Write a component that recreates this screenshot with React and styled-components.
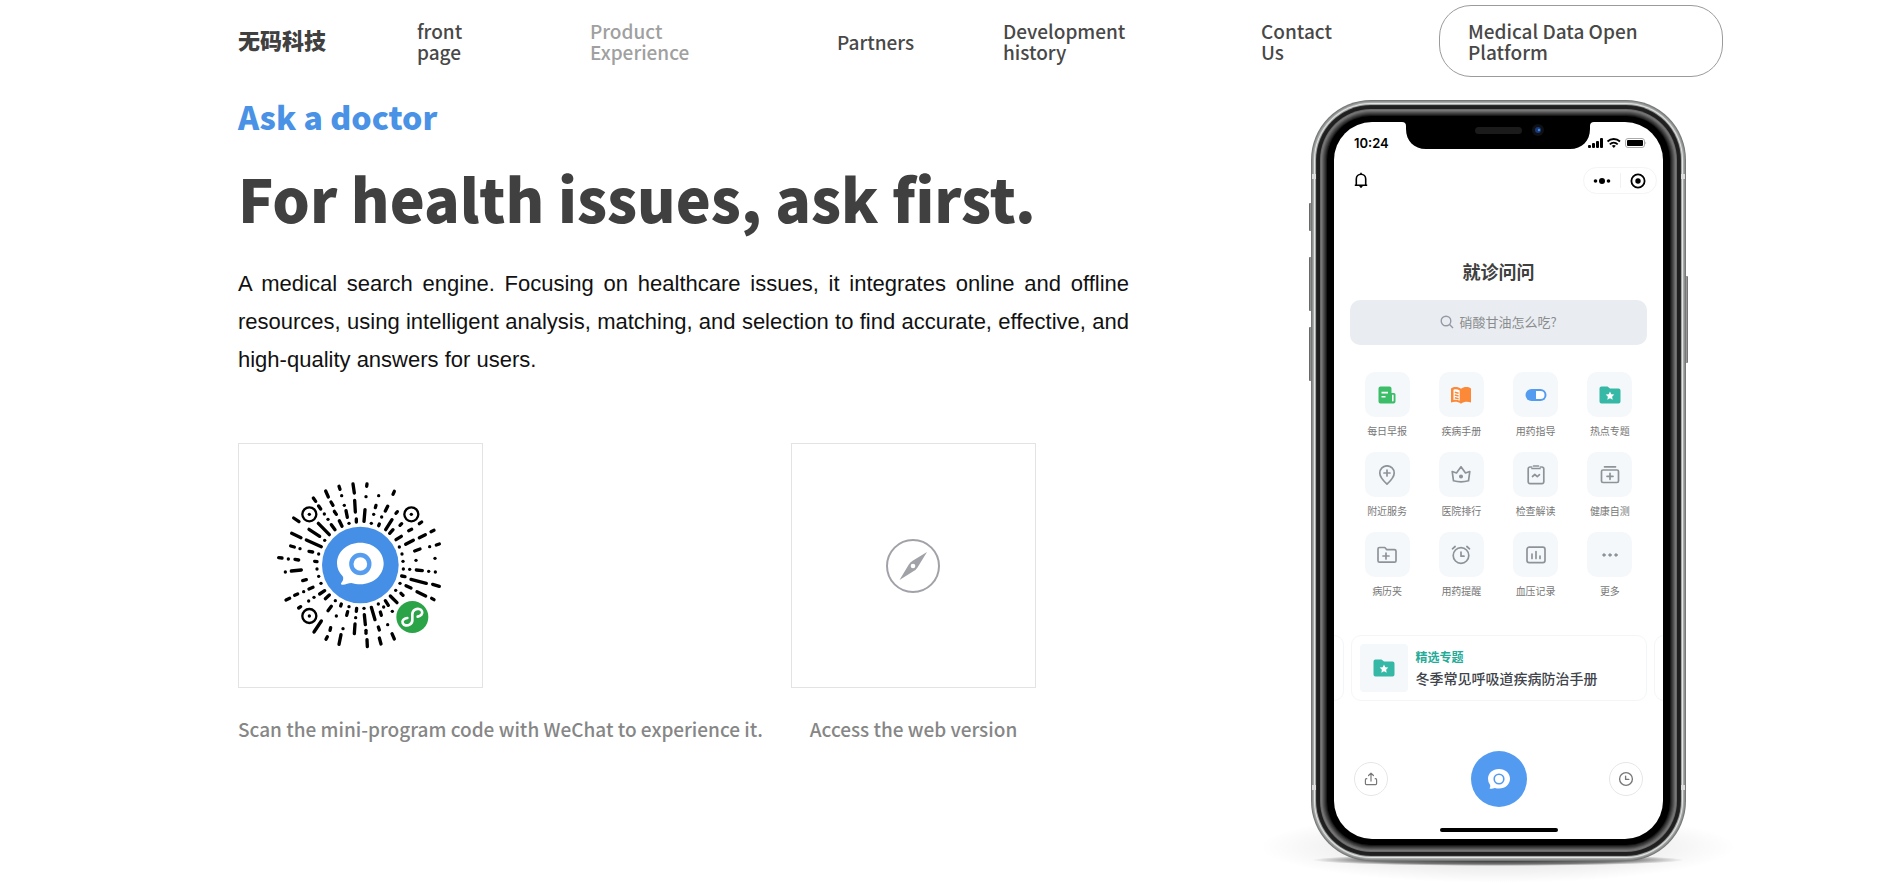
import React from "react";
import styled, { createGlobalStyle } from "styled-components";

const sans = `"Noto Sans CJK SC", "Noto Sans", sans-serif`;

const GlobalStyle = createGlobalStyle`
  * {
    box-sizing: border-box;
  }
  body {
    margin: 0;
    background-color: white;
    color: #404040;
    font-family: ${sans};
  }
`;

const navLinks = [
  { label: "front page" },
  { label: "Product Experience", active: true },
  { label: "Partners" },
  { label: "Development history" },
  { label: "Contact Us" },
];

// [x1, y1, x2, y2] of every dash, [x, y] for the single dots
const rays = [
  [370, 163, 374, 190], [375, 212, 377, 247], [380, 268, 380, 277],
  [412, 163, 411, 170], [409, 201], [406, 240, 403, 275], [447, 198],
  [439, 227, 437, 234], [432, 254], [425, 281], [494, 185, 490, 194],
  [474, 230, 467, 244], [456, 262], [449, 283, 447, 288],
  [503, 246, 499, 251], [487, 270, 468, 300], [516, 282, 511, 287],
  [490, 300, 480, 311], [515, 320, 499, 330], [576, 277, 569, 282],
  [546, 299, 537, 303], [613, 302, 604, 306], [587, 315, 569, 324],
  [551, 332, 528, 344], [629, 343, 620, 346], [600, 351],
  [571, 358, 555, 364], [509, 352], [517, 373], [616, 386], [559, 392],
  [520, 395], [617, 427], [597, 425], [578, 423, 560, 421], [540, 419],
  [521, 418], [516, 439, 526, 441], [544, 449, 590, 461],
  [609, 464, 629, 470], [511, 461], [529, 468, 544, 475],
  [562, 486, 588, 499], [606, 506, 613, 510], [498, 482],
  [514, 491, 520, 497], [482, 499, 502, 519], [467, 513, 476, 527],
  [488, 545], [462, 532], [446, 523], [452, 547, 455, 557], [474, 585],
  [487, 612, 494, 628], [449, 625, 454, 643], [446, 592, 449, 601],
  [425, 533, 436, 570], [403, 536], [404, 555, 407, 585],
  [409, 602, 409, 611], [412, 630, 413, 651], [381, 536, 380, 545],
  [378, 564], [376, 583, 374, 612], [358, 531], [354, 546, 351, 557],
  [340, 597], [334, 615, 328, 644], [335, 523, 333, 529], [320, 559],
  [305, 530, 295, 543], [303, 594, 301, 602], [293, 621, 289, 629],
  [317, 513], [299, 496, 287, 507], [275, 574, 253, 607],
  [285, 483, 270, 493], [274, 461], [267, 440], [253, 503], [237, 514],
  [213, 531, 207, 535], [250, 473, 238, 478], [222, 486],
  [204, 493, 195, 497], [180, 506, 169, 511], [230, 450, 219, 453],
  [262, 418], [215, 421, 185, 424], [167, 427], [262, 396, 255, 395],
  [207, 391, 196, 389], [176, 388], [157, 385, 147, 384],
  [249, 367, 238, 365], [267, 373], [211, 357], [194, 352, 183, 349],
  [275, 351, 230, 331], [214, 324, 186, 311], [285, 332],
  [270, 320, 238, 299], [299, 315, 266, 281], [316, 300, 305, 285],
  [208, 276, 192, 265], [337, 290, 329, 273], [320, 254, 314, 245],
  [295, 269], [284, 253], [273, 238, 267, 229], [258, 215, 251, 205],
  [296, 202, 288, 184], [310, 227, 304, 217], [358, 281],
  [353, 263, 349, 243], [344, 227], [336, 198], [331, 179, 328, 170],
];

const finders = [
  [239, 254],
  [545, 254],
  [239, 559],
];

const MiniProgramCode = () => (
  <svg viewBox="28 43 729 729" width="100%" height="100%" role="img">
    <title>mini-program code</title>
    <g stroke="black" strokeWidth="10" strokeLinecap="round">
      {rays.map(([x1, y1, x2 = x1, y2 = y1]) => (
        <line key={`${x1}-${y1}`} x1={x1} y1={y1} x2={x2} y2={y2} />
      ))}
    </g>
    {finders.map(([x, y]) => (
      <g key={`${x}-${y}`}>
        <circle cx={x} cy={y} r="28" fill="white" />
        <circle cx={x} cy={y} r="21" fill="none" stroke="black" strokeWidth="7" />
        <circle cx={x} cy={y} r="5" />
      </g>
    ))}
    <circle cx="392" cy="406" r="115" fill="#458fe6" />
    <path
      d="M392 339c40 0 70 27 70 62s-30 63-70 63c-9 0-19-2-27-4-9 0-18 6-28 5-5-1-3-5 0-8 4-5 5-12 2-17-11-11-17-24-17-39 0-35 30-62 70-62z"
      fill="white"
    />
    <circle cx="392" cy="403" r="27" fill="white" stroke="#569df0" strokeWidth="13" />
    <circle cx="548" cy="562" r="56" fill="white" />
    <circle cx="548" cy="562" r="48" fill="#2aa446" />
    <path
      d="M533 565c-11 2-17 8-14 15 3 8 14 9 21 5 6-3 8-7 8-13v-18c0-6 3-11 8-14 7-4 18-3 21 5 3 7-3 14-13 16"
      fill="none"
      stroke="white"
      strokeWidth="8"
      strokeLinecap="round"
    />
  </svg>
);

const CompassIcon = () => (
  <svg width="54" height="54" viewBox="0 0 54 54">
    <circle cx="27" cy="27" r="26" fill="none" stroke="#a0a2a8" strokeWidth="2" />
    <path
      d="M41 13 31.500 28.500Q30 31 27 32.500L13.500 41 22.500 26Q24 23 27 21.500z"
      fill="#a0a2a8"
    />
    <circle cx="27" cy="27" r="2.300" fill="white" />
  </svg>
);

const NewsIcon = () => (
  <svg width="20" height="20" viewBox="0 0 20 20">
    <path d="M3.500 1.500h9a2 2 0 0 1 2 2V8H17a1.500 1.500 0 0 1 1.500 1.500v7a2 2 0 0 1-2 2h-13a2 2 0 0 1-2-2v-13a2 2 0 0 1 2-2z" fill="#3cbd68" />
    <path d="M15 9.800h1.600v6a.8.8 0 0 1-1.600 0zM4.500 6.800h6.500v1.600H4.500zM4.500 11h4v1.600h-4z" fill="white" />
  </svg>
);

const BookIcon = () => (
  <svg width="20" height="20" viewBox="0 0 20 20">
    <path d="M0 3.500C3 1.500 7 1.500 10 3.700c3-2.200 7-2.200 10-.2v14c-3.500-1.300-7-1-10 1.200-3-2.200-6.500-2.500-10-1.200z" fill="#fb8938" />
    <path d="M2.500 4.800c2-.8 4-.6 6.200.6v10.400c-2-1-4-1.200-6.200-.8z" fill="white" />
    <path d="M3.800 7.200l3.800 1M3.800 10l3.800 1M3.800 12.800l3.800 1" stroke="#fb8938" strokeWidth="1.400" />
  </svg>
);

const PillIcon = () => (
  <svg width="22" height="14" viewBox="0 0 22 14">
    <rect x="0.500" y="1" width="21" height="12" rx="6" fill="#549cf0" />
    <path d="M11 3h4.500a4 4 0 0 1 0 8H11z" fill="white" />
  </svg>
);

const StarFolderIcon = () => (
  <svg width="22" height="18" viewBox="0 0 22 18">
    <path d="M2.500.5h6l2.500 2h8.500a2 2 0 0 1 2 2v11a2 2 0 0 1-2 2h-17a2 2 0 0 1-2-2v-13a2 2 0 0 1 2-2z" fill="#35b8a6" />
    <path d="m11 5.500 1.300 2.700 3 .4-2.200 2.100.6 3L11 12.300l-2.700 1.400.6-3-2.200-2.100 3-.4z" fill="white" />
  </svg>
);

const LineIcon = ({ size = 20, color = "#8d9499", width = 1.7, children }) => (
  <svg
    width={size}
    height={size}
    viewBox="0 0 20 20"
    fill="none"
    stroke={color}
    strokeWidth={width}
    strokeLinecap="round"
    strokeLinejoin="round"
  >
    {children}
  </svg>
);

const PinIcon = () => (
  <LineIcon>
    <path d="M10 19.200C6 15.500 2.800 12 2.800 8a7.200 7.200 0 0 1 14.400 0c0 4-3.200 7.500-7.200 11.200zM10 5v6M7 8h6" />
  </LineIcon>
);

const CrownIcon = () => (
  <LineIcon>
    <path d="M1.200 6.500 5.500 8 10 1.800 14.500 8l4.300-1.500-1.300 9.300Q10 17.800 2.500 15.800z" />
    <circle cx="10" cy="11.500" r="1.200" fill="#8d9499" />
  </LineIcon>
);

const ReportIcon = () => (
  <LineIcon>
    <path d="M5.500 2H4a1.800 1.800 0 0 0-1.800 1.800v13A1.800 1.800 0 0 0 4 18.600h12a1.800 1.800 0 0 0 1.800-1.800v-13A1.800 1.800 0 0 0 16 2h-1.500M7.500 1h5M6 3.500h8M6.500 11.500 8.800 9.500l2.500 2.200 2.200-2" />
  </LineIcon>
);

const HealthBoxIcon = () => (
  <LineIcon>
    <rect x="1.500" y="5" width="17" height="12.500" rx="1.500" />
    <path d="M4.500 1.800h11M10 8.300v6M7 11.300h6" />
  </LineIcon>
);

const PlusFolderIcon = () => (
  <LineIcon>
    <path d="M2.500 2.500h5.300l2 2.200h7.700a1.500 1.500 0 0 1 1.500 1.500v9.500a1.500 1.500 0 0 1-1.500 1.500h-15A1.500 1.500 0 0 1 1 15.700V4a1.500 1.500 0 0 1 1.500-1.500zM9 8v6M6 11h6" />
  </LineIcon>
);

const AlarmIcon = () => (
  <LineIcon>
    <circle cx="10" cy="10.500" r="7.800" />
    <path d="M10 7v4.200h3M1.500 3.800l2.600-2.300M18.500 3.800l-2.600-2.300" />
  </LineIcon>
);

const ChartIcon = () => (
  <LineIcon>
    <rect x="1" y="2.200" width="18" height="15.500" rx="2.200" />
    <path d="M6 9v4.500M10 6.500v7M14 11v2.500" />
  </LineIcon>
);

const MoreIcon = () => (
  <LineIcon>
    <g fill="#8d9499" strokeWidth="0.800">
      <circle cx="4" cy="10" r="1.300" />
      <circle cx="10" cy="10" r="1.300" />
      <circle cx="16" cy="10" r="1.300" />
    </g>
  </LineIcon>
);

const services = [
  { name: "每日早报", icon: NewsIcon },
  { name: "疾病手册", icon: BookIcon },
  { name: "用药指导", icon: PillIcon },
  { name: "热点专题", icon: StarFolderIcon },
  { name: "附近服务", icon: PinIcon },
  { name: "医院排行", icon: CrownIcon },
  { name: "检查解读", icon: ReportIcon },
  { name: "健康自测", icon: HealthBoxIcon },
  { name: "病历夹", icon: PlusFolderIcon },
  { name: "用药提醒", icon: AlarmIcon },
  { name: "血压记录", icon: ChartIcon },
  { name: "更多", icon: MoreIcon },
];

// bezel rings from the steel edge in to the black glass
const rings = [
  [0, "#767877"],
  [1, "#8f9190"],
  [2, "#a9abaa"],
  [3, "#e2e4e3"],
  [4, "#a4a6a5"],
  [5, "#2b2b2b"],
  [6, "#1f1f1f"],
  [9, "#6a6a6a"],
  [10, "#777777"],
  [11, "#666666"],
  [12, "#525252"],
  [13, "#404040"],
  [14, "#2e2e2e"],
  [15, "#191919"],
  [16, "#000000"],
];

const DeviceBody = () => (
  <DeviceSvg viewBox="-60 0 495 783">
    <defs>
      <radialGradient id="floor">
        <stop offset="0" stopColor="#000" stopOpacity="0.800" />
        <stop offset="0.700" stopColor="#000" stopOpacity="0.500" />
        <stop offset="1" stopColor="#000" stopOpacity="0" />
      </radialGradient>
      <radialGradient id="haze">
        <stop offset="0" stopColor="#000" stopOpacity="0.120" />
        <stop offset="0.700" stopColor="#000" stopOpacity="0.050" />
        <stop offset="1" stopColor="#000" stopOpacity="0" />
      </radialGradient>
      <linearGradient id="key">
        <stop offset="0" stopColor="#555" />
        <stop offset="0.500" stopColor="#b5b7b6" />
        <stop offset="1" stopColor="#666" />
      </linearGradient>
    </defs>
    <ellipse cx="187" cy="747" rx="238" ry="36" fill="url(#haze)" />
    <ellipse cx="187" cy="760" rx="186" ry="6" fill="url(#floor)" />
    {[[103, 28], [157, 54], [227, 54]].map(([y, h]) => (
      <rect key={y} x="-2" y={y} width="5" height={h} rx="1" fill="url(#key)" />
    ))}
    <rect x="372" y="176" width="5" height="87" rx="1" fill="url(#key)" />
    {rings.map(([inset, color]) => (
      <rect
        key={inset}
        x={inset}
        y={inset}
        width={375 - inset * 2}
        height={761 - inset * 2}
        rx={60 - inset}
        fill={color}
      />
    ))}
    {[[1, 74], [370, 74], [1, 685], [370, 685]].map(([x, y]) => (
      <rect key={`${x}-${y}`} x={x} y={y} width="4" height="5" fill="#dcdcdc" />
    ))}
  </DeviceSvg>
);

const Notch = () => (
  <NotchSvg width="192" height="28" viewBox="0 0 192 28">
    <path d="M0 0h192q-4 0-4 4v3c0 12-8 20-20 20H24C12 27 4 19 4 7V4Q4 0 0 0z" />
    <rect x="73" y="5" width="47" height="7" rx="3.500" fill="#1b1b1b" />
    <circle cx="136" cy="8" r="6" fill="#0e1014" />
    <circle cx="136" cy="8" r="3" fill="#173a78" />
    <circle cx="137" cy="8" r="1.200" fill="#4a86d8" />
  </NotchSvg>
);

const StatusIcons = () => (
  <svg width="59" height="12" viewBox="0 0 59 12">
    <rect x="0" y="8" width="3" height="3" rx="1" />
    <rect x="4" y="6" width="3" height="5" rx="1" />
    <rect x="8" y="4" width="3" height="7" rx="1" />
    <rect x="12" y="1" width="3" height="10" rx="1" />
    <g fill="none" stroke="black" strokeWidth="1.800">
      <path d="M19.500 4.500a9 9 0 0 1 12.500 0M21.800 7.300a5.800 5.800 0 0 1 7.900 0" />
    </g>
    <path d="M23.800 8.800a3.200 3.200 0 0 1 4 0l-2 2.200z" />
    <rect x="37.500" y="1.500" width="19" height="9" rx="2.500" fill="none" stroke="#aaa" />
    <rect x="39" y="3" width="16" height="6" rx="1" />
    <path d="M57.500 4.500q1.500 1.500 0 3z" fill="#999" />
  </svg>
);

const BellIcon = () => (
  <svg width="14" height="17" viewBox="0 0 14 17" fill="none" stroke="black" strokeWidth="1.600">
    <path d="M0.800 13.200h12.400M2.300 13V7a4.700 4.700 0 0 1 9.400 0v6M7 0.800v1.500" />
    <path d="M5.500 14h3L7 16z" fill="black" strokeWidth="0.500" />
  </svg>
);

const DotsIcon = () => (
  <svg width="18" height="8" viewBox="0 0 18 8">
    <circle cx="2.500" cy="4" r="1.800" />
    <circle cx="9" cy="4" r="3" />
    <circle cx="15.500" cy="4" r="1.800" />
  </svg>
);

const TargetIcon = () => (
  <svg width="16" height="16" viewBox="0 0 16 16">
    <circle cx="8" cy="8" r="6.600" fill="none" stroke="black" strokeWidth="1.800" />
    <circle cx="8" cy="8" r="2.700" />
  </svg>
);

const SearchIcon = () => (
  <svg width="14" height="14" viewBox="0 0 14 14" fill="none" stroke="#9599a6" strokeWidth="1.400">
    <circle cx="6" cy="6" r="4.800" />
    <path d="m9.600 9.600 3.400 3.400" />
  </svg>
);

const ShareIcon = () => (
  <LineIcon size={14} color="#777">
    <path d="M4 9.500H3.500A1.500 1.500 0 0 0 2 11v5.500A1.500 1.500 0 0 0 3.500 18h13a1.500 1.500 0 0 0 1.500-1.500V11a1.500 1.500 0 0 0-1.500-1.500H16M10 13V1.500M6.500 5 10 1.500 13.500 5" />
  </LineIcon>
);

const HistoryIcon = () => (
  <LineIcon size={16} color="#777">
    <circle cx="10" cy="10" r="8" />
    <path d="M9.500 6.500v4h4" />
  </LineIcon>
);

const BubbleIcon = () => (
  <svg width="24" height="22" viewBox="0 0 24 22">
    <path d="M12 1c6.500 0 11 4.300 11 9.800s-4.500 9.800-11 9.800c-1.500 0-2.800-.2-4-.6-1.500 0-3 1-5 .8-.6-.2-.2-.7 0-1.200.4-1 .4-2 0-2.800A9.500 9.500 0 0 1 1 10.800C1 5.300 5.500 1 12 1z" fill="white" />
    <circle cx="12" cy="11" r="4.800" fill="white" stroke="#529bf0" strokeWidth="1.600" />
  </svg>
);

const PhoneScreen = () => (
  <Screen>
    <Notch />
    <StatusBar>
      <span>10:24</span>
      <StatusIcons />
    </StatusBar>
    <ToolRow>
      <PlainButton aria-label="notifications">
        <BellIcon />
      </PlainButton>
      <Capsule>
        <CapsuleButton aria-label="menu">
          <DotsIcon />
        </CapsuleButton>
        <CapsuleButton aria-label="close">
          <TargetIcon />
        </CapsuleButton>
      </Capsule>
    </ToolRow>
    <AppTitle>就诊问问</AppTitle>
    <SearchButton>
      <SearchIcon />
      硝酸甘油怎么吃?
    </SearchButton>
    <ServiceGrid>
      {services.map(({ name, icon: Icon }) => (
        <Service key={name}>
          <ServiceTile>
            <Icon />
          </ServiceTile>
          {name}
        </Service>
      ))}
    </ServiceGrid>
    <Carousel>
      <TopicCard />
      <TopicCard>
        <TopicTile>
          <StarFolderIcon />
        </TopicTile>
        <div>
          <TopicTag>精选专题</TopicTag>
          <TopicName>冬季常见呼吸道疾病防治手册</TopicName>
        </div>
      </TopicCard>
      <TopicCard />
    </Carousel>
    <BottomBar>
      <RoundButton aria-label="share">
        <ShareIcon />
      </RoundButton>
      <RoundButton $primary aria-label="ask">
        <BubbleIcon />
      </RoundButton>
      <RoundButton aria-label="history">
        <HistoryIcon />
      </RoundButton>
    </BottomBar>
    <HomeBar />
  </Screen>
);

const App = () => {
  return (
    <>
      <GlobalStyle />
      <Page>
        <Nav>
          <Logo href="#home">无码科技</Logo>
          {navLinks.map((link) => (
            <NavLink key={link.label} href="#nav" $active={link.active}>
              {link.label}
            </NavLink>
          ))}
          <PlatformLink href="#platform">Medical Data Open Platform</PlatformLink>
        </Nav>
        <Main>
          <Intro>
            <Product>Ask a doctor</Product>
            <Title>For health issues, ask first.</Title>
            <Description>
              A medical search engine. Focusing on healthcare issues, it
              integrates online and offline resources, using intelligent
              analysis, matching, and selection to find accurate, effective, and
              high-quality answers for users.
            </Description>
            <Entries>
              <Entry>
                <EntryBox>
                  <MiniProgramCode />
                </EntryBox>
                <Caption>
                  Scan the mini-program code with WeChat to experience it.
                </Caption>
              </Entry>
              <Entry>
                <EntryBox as="a" href="#web" aria-label="Access the web version">
                  <CompassIcon />
                </EntryBox>
                <Caption $center>Access the web version</Caption>
              </Entry>
            </Entries>
          </Intro>
          <Phone>
            <DeviceBody />
            <PhoneScreen />
          </Phone>
        </Main>
      </Page>
    </>
  );
};

export default App;

const Page = styled.div`
  padding: 5px 171px 0 238px;
`;
const Nav = styled.nav`
  display: grid;
  grid-template-columns:
    minmax(0, 90fr) minmax(0, 84fr) minmax(0, 158fr) minmax(0, 77fr)
    minmax(0, 169fr) minmax(0, 89fr) minmax(0, 284fr);
  column-gap: 89px;
  align-items: center;
  font-size: 19px;
  font-weight: 500;
  line-height: 21px;
`;
const Logo = styled.a`
  padding-bottom: 4px;
  color: #404040;
  font-size: 22px;
  font-weight: 900;
  text-decoration: none;
  white-space: nowrap;
`;
const NavLink = styled.a`
  color: ${(props) => (props.$active ? "#a0a0a0" : "#484848")};
  text-decoration: none;
`;
const PlatformLink = styled(NavLink)`
  border: 1px solid #9b9b9b;
  border-radius: 32px;
  padding: 14px 28px;
`;
const Main = styled.main`
  display: flex;
  justify-content: space-between;
  padding: 23px 0 22px;
`;
const Intro = styled.section`
  width: 60%;
`;
const Product = styled.h2`
  margin: 0;
  color: #4992e6;
  font-size: 32px;
  font-weight: 900;
  line-height: 32px;
`;
const Title = styled.h1`
  margin: 30px 0 0;
  font-size: 59px;
  font-weight: 900;
  line-height: 72px;
`;
const Description = styled.p`
  margin: 31px 0 0;
  color: #111111;
  font-family: "Liberation Sans", Arial, sans-serif;
  font-size: 22px;
  line-height: 38px;
  text-align: justify;
`;
const Entries = styled.div`
  display: flex;
  gap: 28px;
  margin-top: 64px;
`;
const Entry = styled.div`
  display: flex;
  flex-direction: column;
`;
const EntryBox = styled.div`
  display: flex;
  align-items: center;
  justify-content: center;
  width: 245px;
  height: 245px;
  border: 1px solid #e3e3e3;
`;
const Caption = styled.p`
  margin: 27px 0 0;
  color: #868686;
  font-size: 19px;
  font-weight: 500;
  line-height: 28px;
  text-align: ${(props) => (props.$center ? "center" : "left")};
`;
const Phone = styled.section`
  position: relative;
  width: 375px;
  height: 761px;
  margin-right: 37px;
  padding: 22px 23px;
`;
const DeviceSvg = styled.svg`
  position: absolute;
  top: 0;
  left: -60px;
  width: 495px;
  height: 783px;
`;
const NotchSvg = styled.svg`
  position: absolute;
  top: 0;
  left: 68px;
`;
const Screen = styled.div`
  position: relative;
  display: flex;
  flex-direction: column;
  height: 100%;
  overflow: hidden;
  border-radius: 38px;
  padding: 0 16px;
  background-color: white;
`;
const StatusBar = styled.div`
  display: flex;
  align-items: center;
  justify-content: space-between;
  height: 42px;
  padding-left: 4px;
  color: black;
  font-family: Inter, sans-serif;
  font-size: 13px;
  font-weight: 600;
`;
const ToolRow = styled.div`
  display: flex;
  align-items: center;
  justify-content: space-between;
  margin: 3px -10px 0 4px;
`;
const PlainButton = styled.button`
  display: flex;
  border: none;
  padding: 0;
  background: none;
  cursor: pointer;
`;
const Capsule = styled.div`
  display: flex;
  width: 74px;
  height: 27px;
  border: 1px solid #f4f4f4;
  border-radius: 14px;
  padding: 5px 0;
`;
const CapsuleButton = styled(PlainButton)`
  flex: 1;
  align-items: center;
  justify-content: center;
  & + & {
    border-left: 1px solid #f1f1f1;
  }
`;
const AppTitle = styled.h3`
  margin: 65px 0 0;
  font-size: 18px;
  font-weight: 700;
  line-height: 24px;
  text-align: center;
`;
const SearchButton = styled.button`
  display: flex;
  align-items: center;
  justify-content: center;
  gap: 5px;
  height: 45px;
  margin-top: 17px;
  border: none;
  border-radius: 10px;
  padding: 0 0 2px;
  background-color: #e9edf1;
  color: #8a8c8e;
  font-family: ${sans};
  font-size: 13px;
`;
const ServiceGrid = styled.div`
  display: grid;
  grid-template-columns: repeat(4, 1fr);
  row-gap: 12px;
  margin-top: 27px;
`;
const Service = styled.button`
  display: flex;
  flex-direction: column;
  align-items: center;
  gap: 6px;
  border: none;
  padding: 0 0 1px;
  background: none;
  color: #777777;
  font-family: ${sans};
  font-size: 10px;
  line-height: 16px;
`;
const ServiceTile = styled.span`
  display: flex;
  align-items: center;
  justify-content: center;
  width: 45px;
  height: 45px;
  border-radius: 10px;
  background-color: #f4f8fb;
`;
const Carousel = styled.div`
  display: flex;
  justify-content: center;
  gap: 7px;
  margin-top: 35px;
`;
const TopicCard = styled.div`
  display: flex;
  flex: 0 0 296px;
  align-items: center;
  gap: 8px;
  height: 66px;
  border: 1px solid #f3f6f7;
  border-radius: 10px;
  padding: 0 8px;
`;
const TopicTile = styled(ServiceTile)`
  width: 48px;
  height: 48px;
  border-radius: 4px;
`;
const TopicTag = styled.div`
  color: #24ab98;
  font-size: 12px;
  font-weight: 700;
  line-height: 20px;
`;
const TopicName = styled.div`
  color: #40434a;
  font-size: 14px;
  font-weight: 500;
  line-height: 22px;
`;
const BottomBar = styled.div`
  display: flex;
  align-items: center;
  justify-content: space-between;
  margin-top: 50px;
  padding: 0 4px;
`;
const RoundButton = styled.button`
  display: flex;
  align-items: center;
  justify-content: center;
  width: ${(props) => (props.$primary ? 56 : 34)}px;
  height: ${(props) => (props.$primary ? 56 : 34)}px;
  border: ${(props) => (props.$primary ? "none" : "1px solid #e6e6e6")};
  border-radius: 50%;
  padding: 0;
  background-color: ${(props) => (props.$primary ? "#529bf0" : "white")};
`;
const HomeBar = styled.div`
  align-self: center;
  width: 118px;
  height: 4px;
  margin-top: 21px;
  border-radius: 2px;
  background-color: black;
`;
